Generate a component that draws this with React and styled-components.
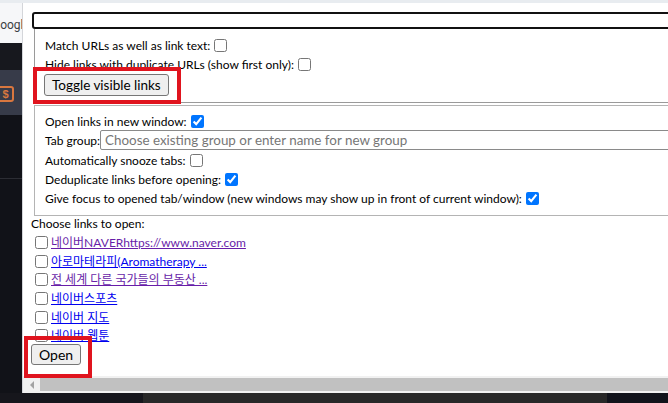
import React from 'react';
import styled, { createGlobalStyle } from 'styled-components';

const GlobalStyle = createGlobalStyle`
    * { box-sizing: border-box; }
    html, body {
        margin: 0;
        padding: 0;
        overflow: hidden;
        background: #111218;
    }
    body {
        font-family: Lato, "Noto Sans CJK KR", sans-serif;
    }
`

const links = [
    { text: '네이버NAVERhttps://www.naver.com', visited: true },
    { text: '아로마테라피(Aromatherapy ...', visited: false },
    { text: '전 세계 다른 국가들의 부동산 ...', visited: true },
    { text: '네이버스포츠', visited: false },
    { text: '네이버 지도', visited: false },
    { text: '네이버 웹툰', visited: false },
]

const sideBlocks = [
    { h: 40, bg: '#f6f7f9', kind: 'tab' },
    { h: 27, bg: '#17181e' },
    { h: 45, bg: '#373b49', kind: 'icon' },
    { h: 63, bg: '#111218' },
    { h: 1, bg: '#2c2d34' },
    { h: 214, bg: '#111218' },
]

const App = () => {
    return (
        <>
            <GlobalStyle />
            <Page>
                <TopBand />
                <Middle>
                    <Side>
                        {sideBlocks.map((b, i) => (
                            <SideBlock key={i} $h={b.h} $bg={b.bg}>
                                {b.kind === 'tab' && <TabTitle>Google</TabTitle>}
                                {b.kind === 'icon' && <DollarIcon>$</DollarIcon>}
                            </SideBlock>
                        ))}
                    </Side>
                    <Popup>
                        <Content>
                            <Search type='text' />
                            <Box $first>
                                <Row>
                                    Match URLs as well as link text:
                                    <Check />
                                </Row>
                                <Row>
                                    Hide links with duplicate URLs (show first only):
                                    <Check />
                                </Row>
                                <Boton $toggle>Toggle visible links</Boton>
                            </Box>
                            <Box>
                                <Row>
                                    Open links in new window:
                                    <Check defaultChecked />
                                </Row>
                                <GroupRow>
                                    <GroupLabel>Tab group:</GroupLabel>
                                    <GroupInput
                                        type='text'
                                        placeholder='Choose existing group or enter name for new group'
                                    />
                                </GroupRow>
                                <Row $gap>
                                    Automatically snooze tabs:
                                    <Check />
                                </Row>
                                <Row>
                                    Deduplicate links before opening:
                                    <Check defaultChecked />
                                </Row>
                                <Row>
                                    Give focus to opened tab/window (new windows may show up in front of current window):
                                    <Check defaultChecked />
                                </Row>
                            </Box>
                            <ChooseLabel>Choose links to open:</ChooseLabel>
                            {links.map((l) => (
                                <LinkRow key={l.text}>
                                    <Check $list />
                                    <Enlace href='#' $visited={l.visited}>{l.text}</Enlace>
                                </LinkRow>
                            ))}
                            <Boton>Open</Boton>
                        </Content>
                        <HScroll>
                            <ArrowButton><ArrowLeft /></ArrowButton>
                            <Thumb />
                        </HScroll>
                        <Annotation $left={10} $top={64} $w={148} $h={37} />
                        <Annotation $left={1} $top={333} $w={68} $h={42} />
                    </Popup>
                </Middle>
                <BottomBand>
                    <BottomPart $w={143} $bg='#16161c' />
                    <BottomPart $w={464} $bg='#282828' />
                    <BottomPart $w={61} $bg='#11131b' />
                </BottomBand>
            </Page>
        </>
    );
};

const Page = styled.div`
    width: 668px;
    height: 403px;
    overflow: hidden;
    display: grid;
    grid-template-rows: 3px 390px 10px;
`

const TopBand = styled.div`
    background: #e8ecf0;
`

const Middle = styled.div`
    display: flex;
    overflow: hidden;
`

const Side = styled.div`
    width: 22px;
    flex-shrink: 0;
    display: flex;
    flex-direction: column;
    overflow: hidden;
`

const SideBlock = styled.div`
    height: ${p => p.$h}px;
    flex-shrink: 0;
    background: ${p => p.$bg};
    display: flex;
    align-items: center;
    overflow: hidden;
`

const TabTitle = styled.span`
    font-family: Roboto, sans-serif;
    font-size: 12px;
    color: #3c4043;
    margin-left: -8px;
    margin-top: 3px;
    white-space: nowrap;
`

const DollarIcon = styled.div`
    flex-shrink: 0;
    width: 17px;
    height: 16px;
    margin: 2px 0 0 -3px;
    border: 2px solid #d9773f;
    border-radius: 3px;
    color: #d9773f;
    font: bold 11px/12px "Liberation Sans", sans-serif;
    text-align: center;
`

const Popup = styled.div`
    position: relative;
    flex: 0 0 780px;
    background: #fff;
    border-left: 1px solid #d4d6da;
    display: flex;
    flex-direction: column;
`

const Content = styled.div`
    flex: 1;
    padding: 9px 0 0 7px;
    font-size: 12px;
    line-height: 19px;
    color: #000;
`

const Search = styled.input`
    display: block;
    width: 760px;
    height: 17px;
    margin: 0 0 0 2px;
    padding: 0;
    border: 2px solid #111;
    border-radius: 3px;
    outline: none;
`

const Box = styled.div`
    margin: ${p => (p.$first ? '0' : '2px')} 0 0 4px;
    border: 1px solid ${p => (p.$first ? '#9a9a9a' : '#b4b4b4')};
    border-top: ${p => (p.$first ? 'none' : '1px solid #b4b4b4')};
    padding: ${p => (p.$first ? '7px 0 6px 10px' : '6px 0 7px 10px')};
`

const Row = styled.div`
    display: flex;
    align-items: center;
    height: 19px;
    margin-top: ${p => (p.$gap ? '1px' : '0')};
    white-space: nowrap;
`

const Check = styled.input.attrs({ type: 'checkbox' })`
    width: 13px;
    height: 13px;
    flex-shrink: 0;
    margin: 0 0 0 ${p => (p.$list ? '5px' : '4px')};
`

const GroupRow = styled.div`
    display: flex;
    align-items: baseline;
    margin-top: -1px;
    white-space: nowrap;
`

const GroupLabel = styled.span`
    flex-shrink: 0;
`

const GroupInput = styled.input`
    display: block;
    flex: 1;
    min-width: 0;
    height: 20px;
    margin: 0;
    padding: 0 0 0 4px;
    border: 1px solid #8a8a8a;
    border-radius: 2px;
    font-family: Lato, sans-serif;
    font-size: 13.4px;
    outline: none;

    &::placeholder {
        color: #767676;
    }
`

const Boton = styled.button`
    display: block;
    height: ${p => (p.$toggle ? '22px' : '21px')};
    margin: ${p => (p.$toggle ? '0 0 0 -1px' : '-1px 0 0 1px')};
    padding: 0 7px;
    background-color: #efefef;
    border: 1px solid #767676;
    border-radius: 3px;
    font-family: Lato, sans-serif;
    font-size: ${p => (p.$toggle ? '13.5px' : '14px')};
    color: #000;
`

const ChooseLabel = styled.div`
    margin-top: -1px;
    padding-left: 1px;
    line-height: 18px;
`

const LinkRow = styled.div`
    display: flex;
    align-items: center;
    height: 18.7px;
    white-space: nowrap;
`

const Enlace = styled.a`
    margin-left: 3px;
    color: ${p => (p.$visited ? '#681da8' : '#0000ee')};
    text-decoration: underline;
`

const HScroll = styled.div`
    height: 17px;
    flex-shrink: 0;
    background: #f1f1f1;
    display: flex;
`

const ArrowButton = styled.div`
    width: 17px;
    display: flex;
    align-items: center;
    justify-content: center;
`

const ArrowLeft = styled.div`
    width: 0;
    height: 0;
    border-top: 4px solid transparent;
    border-bottom: 4px solid transparent;
    border-right: 4px solid #a3a3a3;
`

const Thumb = styled.div`
    flex: 1;
    margin: 2px 0;
    background: #c1c1c1;
`

const Annotation = styled.div`
    position: absolute;
    left: ${p => p.$left}px;
    top: ${p => p.$top}px;
    width: ${p => p.$w}px;
    height: ${p => p.$h}px;
    border: 4px solid #e0141e;
    pointer-events: none;
`

const BottomBand = styled.div`
    display: flex;
`

const BottomPart = styled.div`
    width: ${p => p.$w}px;
    background: ${p => p.$bg};
`

export default App;
